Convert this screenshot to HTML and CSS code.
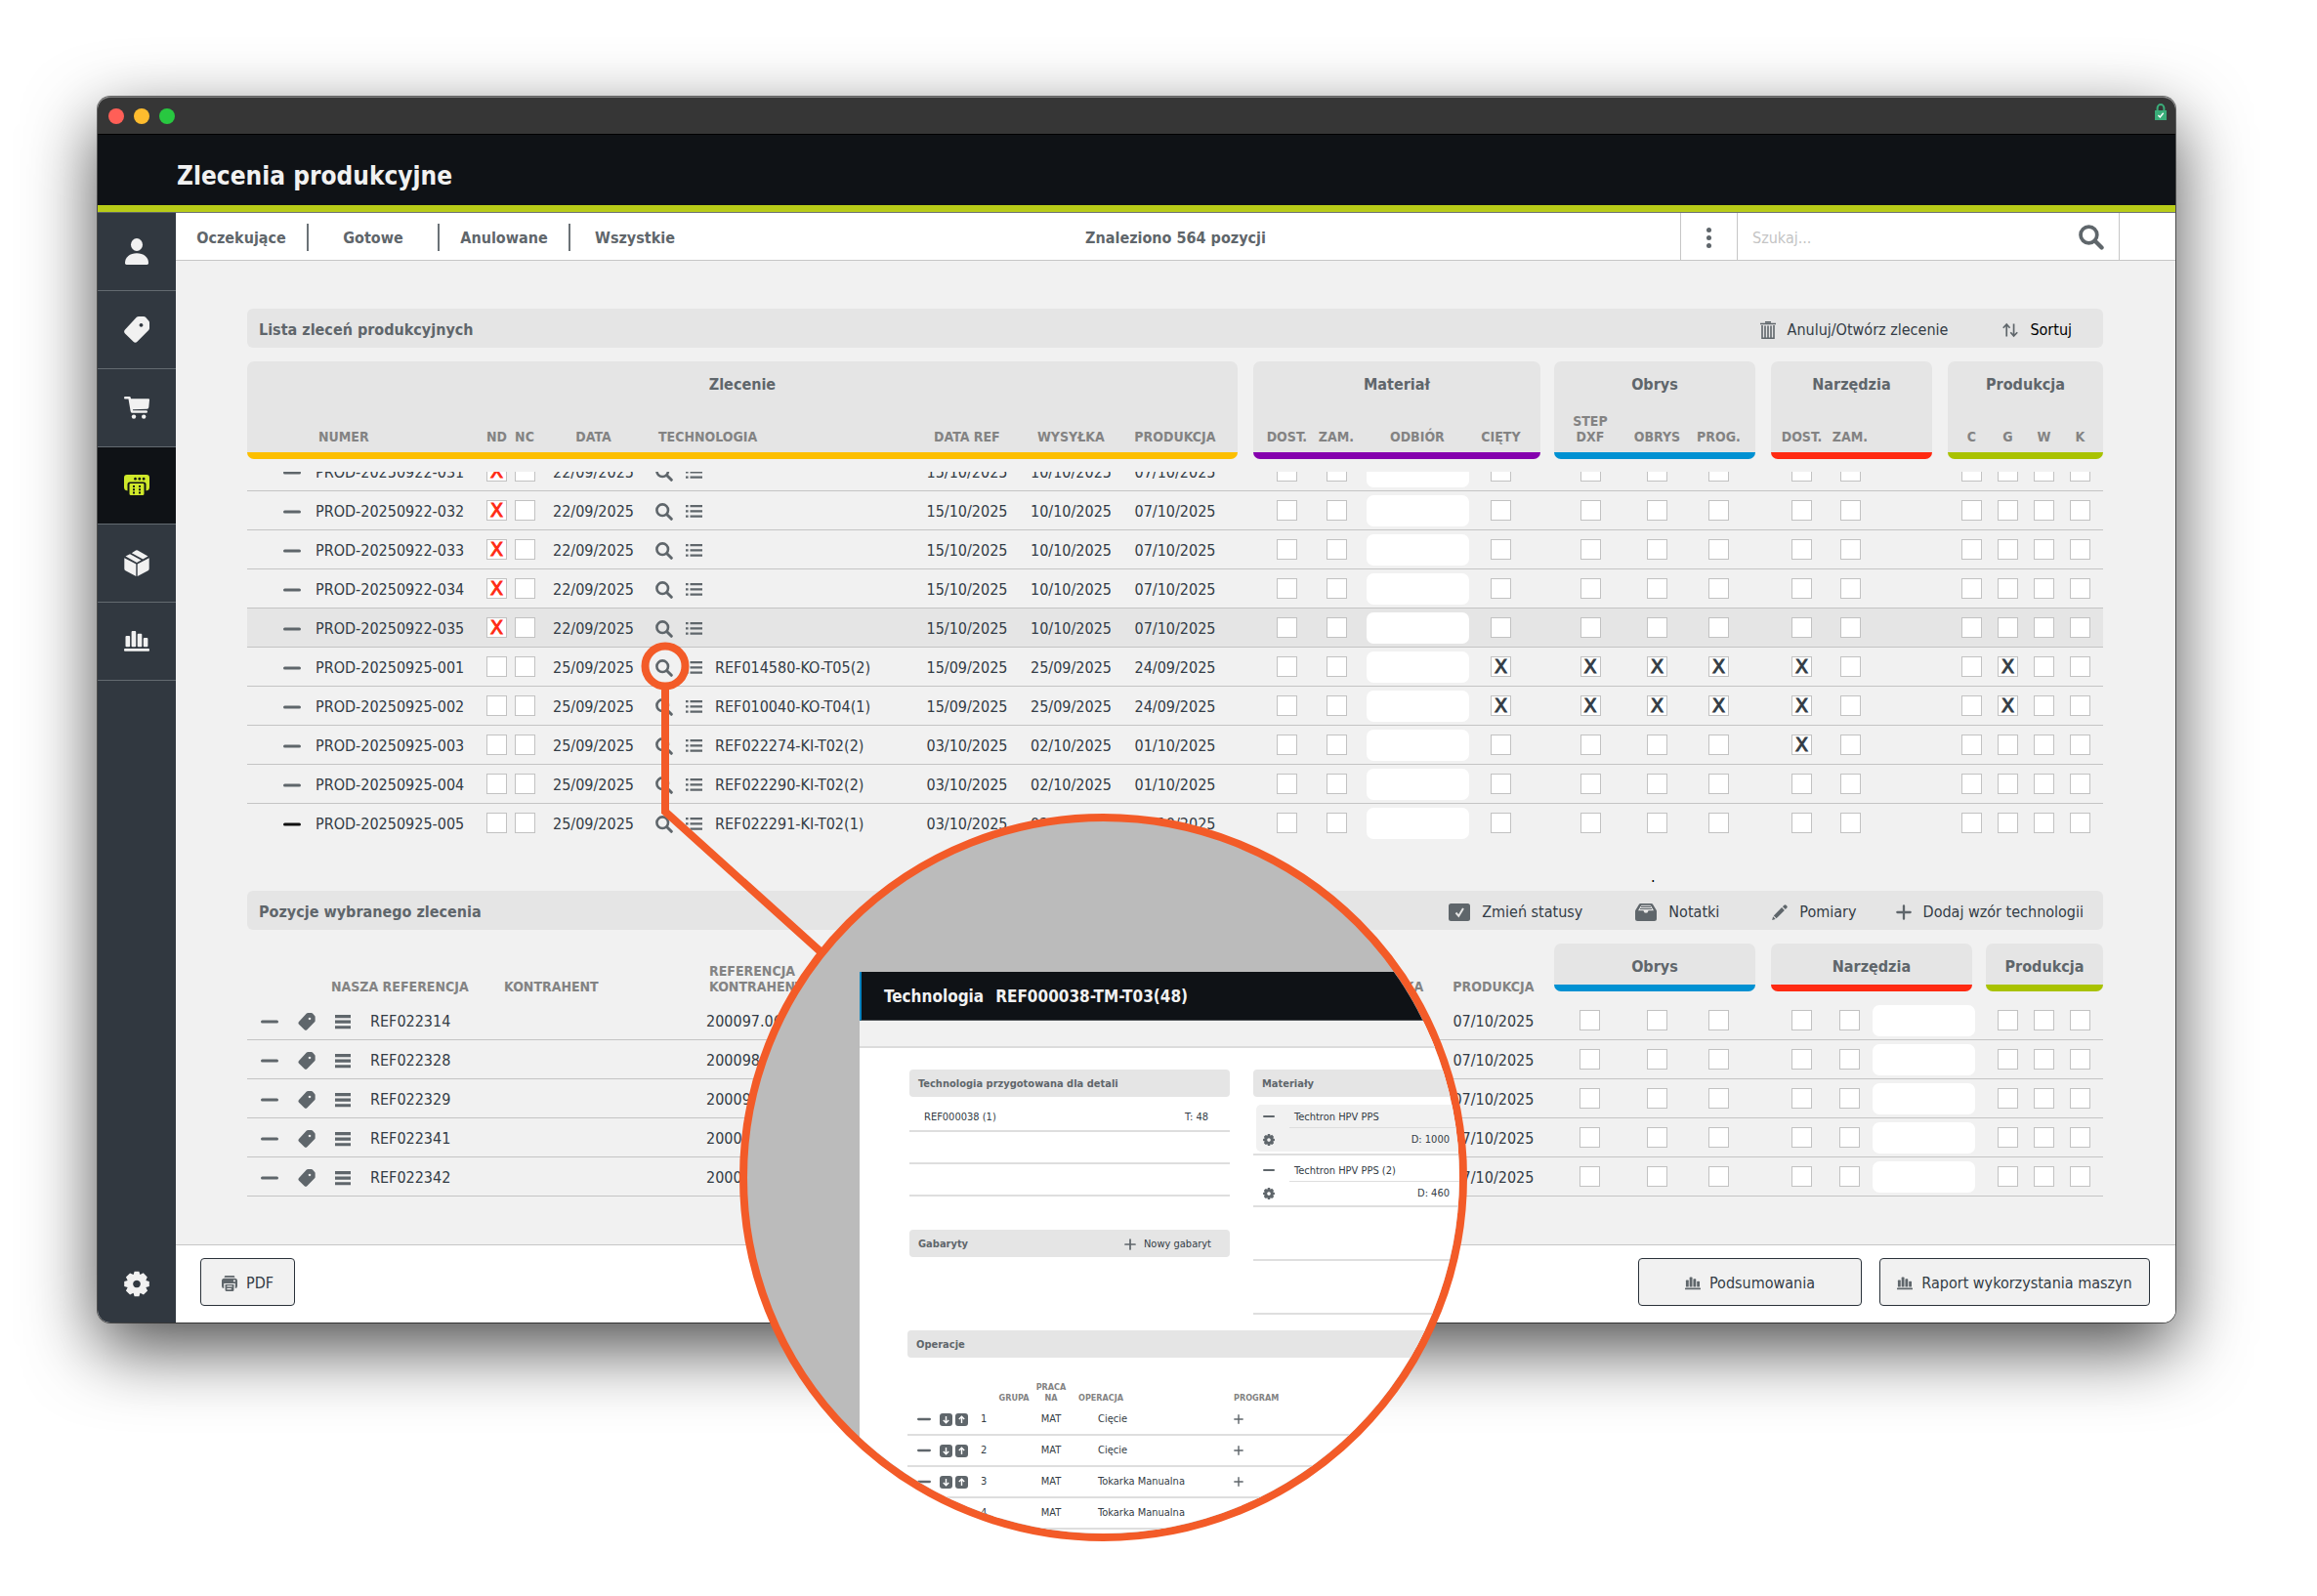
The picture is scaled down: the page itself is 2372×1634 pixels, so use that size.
FILE: index.html
```html
<!DOCTYPE html>
<html lang="pl">
<head>
<meta charset="utf-8">
<title>Zlecenia produkcyjne</title>
<link rel="stylesheet" href="styles.css">
</head>
<body>
<svg class="sprite" aria-hidden="true">
  <symbol id="i-user" viewBox="0 0 26 27"><ellipse cx="13" cy="6.5" rx="6" ry="6.5"/><path d="M1 25.3C1 19 6 15.2 13 15.2S25 19 25 25.3Q25 27 23.5 27H2.500Q1 27 1 25.300z"/></symbol>
  <symbol id="i-tag" viewBox="0 0 26 27"><path fill-rule="evenodd" d="M12.800.8Q13.700 0 15 0H20Q21.300 0 22 .8L25.300 4.500Q26 5.200 26 6.500V12Q26 13.200 25.200 14L13.500 25.800Q11.500 27.600 9.500 25.800L1 17.500Q-.8 15.500 1 13.500zM17.500 7a1.900 1.900 0 1 0 .01 0z"/></symbol>
  <symbol id="i-cart" viewBox="0 0 26 23"><path d="M1 0H5.500Q6.500 0 6.800 1L7 2.200H25Q26.200 2.200 26 3.400L25.300 11Q25.100 12.600 23.600 12.700L8.900 13.200 9.100 14.300H22.700Q24 14.400 24 15.500 24 16.700 22.700 16.800H8.500Q7 16.700 6.700 15.200L4.500 2.600H1Q0 2.500 0 1.300 0 .1 1 0z"/><circle cx="10" cy="20.600" r="2.200"/><circle cx="20.200" cy="20.600" r="2.200"/></symbol>
  <symbol id="i-machine" viewBox="0 0 26 21"><path fill-rule="evenodd" d="M3 0H23Q26 0 26 3V13Q26 16 22.500 16.500V10Q22.500 7.500 20 7.500H6Q3.500 7.500 3.500 10V16.500Q0 16 0 13V3Q0 0 3 0zM11.500 2.800a1.400 1.400 0 1 0 .01 0zM15.800 2.800a1.400 1.400 0 1 0 .01 0zM20.100 2.800a1.400 1.400 0 1 0 .01 0z"/><path fill-rule="evenodd" d="M6.500 9H19.500Q20.500 9 20.500 10V19.500Q20.500 21 19 21H7Q5.500 21 5.500 19.500V10Q5.500 9 6.500 9zM9 11v2h2v-2zM9 14.300v2h2v-2zM9 17.600v1.800h2v-1.800zM15 11v2h2v-2zM15 14.300v2h2v-2zM15 17.600v1.800h2v-1.800z"/></symbol>
  <symbol id="i-box" viewBox="0 0 26 27"><path d="M.3 8.300 12.300 14.400V27L1.500 21.200Q.3 20.500.3 19.200zM25.700 8.300 13.700 14.400V27L24.500 21.200Q25.700 20.500 25.700 19.200zM1.500 6.500 6 4.200 17.500 10.600 13 13zM7.800 3.300 12 .6Q13 0 14 .6L24.500 6.500 19.300 9.400z"/></symbol>
  <symbol id="i-bars" viewBox="0 0 26 21"><rect x="1.500" y="5" width="4.600" height="11.300" rx="1"/><rect x="7.600" y="0" width="4.600" height="16.300" rx="1"/><rect x="13.700" y="2.800" width="4.600" height="13.500" rx="1"/><rect x="19.800" y="7" width="4.600" height="9.300" rx="1"/><rect y="18" width="26" height="2.800" rx="1"/></symbol>
  <symbol id="i-gear" viewBox="-13.500 -13.500 27 27"><path fill-rule="evenodd" d="M-2.500-13.300H2.500L3.500-9.800 7-11.600 11.200-7.200 9.700-3.600 13.300-2.500V2.500L9.700 3.600 11.500 7.200 7.200 11.500 3.600 9.700 2.500 13.300H-2.500L-3.600 9.700-7.200 11.500-11.500 7.200-9.700 3.600-13.300 2.500V-2.500L-9.700-3.600-11.500-7.200-7.200-11.500-3.500-9.800zM0-4a4 4 0 1 0 .01 0z"/></symbol>
  <symbol id="i-search" viewBox="0 0 18 18"><circle cx="7.200" cy="7.200" r="5.800" fill="none" stroke="currentColor" stroke-width="2.600"/><path d="M11.800 11.800 16.300 16.300" stroke="currentColor" stroke-width="3" stroke-linecap="round"/></symbol>
  <symbol id="i-list" viewBox="0 0 17 13"><path d="M0 0h2.600v2.200H0zM4.500 0H17v2.200H4.500zM0 5.300h2.600v2.200H0zM4.500 5.300H17v2.200H4.500zM0 10.600h2.600v2.200H0zM4.500 10.600H17v2.200H4.500z"/></symbol>
  <symbol id="i-menu" viewBox="0 0 15 15"><path d="M0 1h15v3H0zM0 6.200h15v3H0zM0 11.400h15v3H0z"/></symbol>
  <symbol id="i-minus" viewBox="0 0 18 18"><path d="M1.500 9h15" stroke="currentColor" stroke-width="3" stroke-linecap="round"/></symbol>
  <symbol id="i-plus" viewBox="0 0 18 18"><path d="M1.500 9h15M9 1.500v15" stroke="currentColor" stroke-width="2.600" stroke-linecap="round"/></symbol>
  <symbol id="i-trash" viewBox="0 0 16 18"><path d="M0 2.500h16M5 .8h6" stroke="currentColor" stroke-width="1.600"/><path d="M2 4V17.200H14V4M5 4.500v12M8 4.500v12M11 4.500v12" fill="none" stroke="currentColor" stroke-width="1.600"/></symbol>
  <symbol id="i-sort" viewBox="0 0 17 16"><path d="M4.500 15V2M.8 5.600 4.500 1.600 8 5.600M12.300 1v13M8.800 10.400 12.300 14.400 16.200 10.400" fill="none" stroke="currentColor" stroke-width="1.800"/></symbol>
  <symbol id="i-check" viewBox="0 0 22 18"><rect width="22" height="18" rx="2.500"/><path d="M7.500 9.500 10.300 12.800 15 5" fill="none" stroke="#e5e5e5" stroke-width="2"/></symbol>
  <symbol id="i-notes" viewBox="0 0 22 18"><path fill-rule="evenodd" d="M5.500 0H16.500Q17.500 0 18 .8L21.500 6.500Q22 7.300 22 8.200V15.500Q22 18 19.500 18H2.500Q0 18 0 15.500V8.200Q0 7.300.5 6.500L4 .8Q4.500 0 5.500 0zM6.300 1.700 3 7.200H8.500Q8.800 9.800 11 9.800T13.500 7.200H19L15.700 1.700z"/><path d="M6 3.400H16M5 5.500H17" stroke="currentColor" stroke-width="1.100"/></symbol>
  <symbol id="i-pencil" viewBox="0 0 18 18"><path d="M12.300 2.500 14 .8Q15.200-.3 16.400.8L17.200 1.600Q18.300 2.800 17.200 4L15.500 5.700zM11.300 3.500 14.500 6.700 5.200 16 2 12.800zM1.200 13.800 4.200 16.800.2 17.900z"/></symbol>
  <symbol id="i-print" viewBox="0 0 18 18"><path fill-rule="evenodd" d="M4 0H14Q15 0 15 2H3Q3 0 4 0zM3 3H15Q18 3 18 6V12Q18 14.500 15.500 14.500V9H2.500V14.500Q0 14.500 0 12V6Q0 3 3 3zM13.500 5v2h2V5z"/><path fill-rule="evenodd" d="M4 10H14V16.500Q14 18 12.500 18H5.500Q4 18 4 16.500zM6 11.500v1.500h6v-1.500zM6 14.500V16h5v-1.500z"/></symbol>
  <symbol id="i-lock" viewBox="0 0 12 17"><path d="M2.600 8V4.500a3.400 3.400 0 0 1 6.800 0V8" fill="none" stroke="currentColor" stroke-width="2"/><rect y="7" width="12" height="10"/><path d="M3.400 12 5.300 14 8.700 9.800" fill="none" stroke="#fff" stroke-width="1.400"/></symbol>
  <symbol id="i-down" viewBox="0 0 13 13"><rect width="13" height="13" rx="3"/><path d="M6.500 3v7M3.800 7 6.500 9.800 9.200 7" fill="none" stroke="#fff" stroke-width="1.400"/></symbol>
  <symbol id="i-up" viewBox="0 0 13 13"><rect width="13" height="13" rx="3"/><path d="M6.500 10V3M3.800 6 6.500 3.200 9.200 6" fill="none" stroke="#fff" stroke-width="1.400"/></symbol>
</svg>

<div class="window">
  <div class="titlebar">
    <div class="lights"><i class="light red"></i><i class="light amber"></i><i class="light green"></i></div>
    <svg class="lock"><use href="#i-lock"/></svg>
  </div>
  <header class="header"><h1>Zlecenia produkcyjne</h1></header>

  <div class="shell">
    <nav class="sidebar" aria-label="Moduły">
      <ul class="modules">
        <li><a href="#" aria-label="Kontrahenci"><svg class="m27"><use href="#i-user"/></svg></a></li>
        <li><a href="#" aria-label="Oferty"><svg class="m27"><use href="#i-tag"/></svg></a></li>
        <li><a href="#" aria-label="Zamówienia"><svg class="m23"><use href="#i-cart"/></svg></a></li>
        <li><a href="#" class="active" aria-label="Produkcja" aria-current="page"><svg class="m21"><use href="#i-machine"/></svg></a></li>
        <li><a href="#" aria-label="Magazyn"><svg class="m27"><use href="#i-box"/></svg></a></li>
        <li><a href="#" aria-label="Statystyki"><svg class="m21"><use href="#i-bars"/></svg></a></li>
      </ul>
      <a href="#" class="settings" aria-label="Ustawienia"><svg class="m27"><use href="#i-gear"/></svg></a>
    </nav>

    <div class="page">
      <div class="toolbar">
        <div class="tabs">
          <a href="#">Oczekujące</a><a href="#">Gotowe</a><a href="#">Anulowane</a><a href="#">Wszystkie</a>
        </div>
        <p class="found">Znaleziono 564 pozycji</p>
        <div class="tools">
          <button class="more" aria-label="Więcej"><i></i><i></i><i></i></button>
          <label class="search"><input type="text" placeholder="Szukaj..." aria-label="Szukaj"><svg><use href="#i-search"/></svg></label>
        </div>
      </div>

      <main class="content">
        <section>
          <div class="bar">
            <h2>Lista zleceń produkcyjnych</h2>
            <div class="actions orders-actions">
              <button><svg class="w16"><use href="#i-trash"/></svg>Anuluj/Otwórz zlecenie</button>
              <button class="strong"><svg class="w16"><use href="#i-sort"/></svg>Sortuj</button>
            </div>
          </div>
          <table class="grid orders orders-head">
            <colgroup>
              <col class="w70"><col class="w172"><col class="w27"><col class="w30"><col class="w103"><col><col class="w100"><col class="w113"><col class="w114">
              <col class="w16c"><col class="w66"><col class="w38"><col class="w128"><col class="w62">
              <col class="w14"><col class="w74"><col class="w63"><col class="w69">
              <col class="w16c"><col class="w56"><col class="w50"><col class="w59">
              <col class="w16c"><col class="w43"><col class="w37"><col class="w37"><col class="w42">
            </colgroup>
            <thead>
              <tr class="groups">
                <th colspan="9">Zlecenie</th><td></td>
                <th colspan="4">Materiał</th><td></td>
                <th colspan="3">Obrys</th><td></td>
                <th colspan="3">Narzędzia</th><td></td>
                <th colspan="4">Produkcja</th>
              </tr>
              <tr class="labels">
                <th class="yellow first"></th><th class="yellow num">NUMER</th><th class="yellow">ND</th><th class="yellow">NC</th><th class="yellow">DATA</th><th class="yellow tech">TECHNOLOGIA</th><th class="yellow">DATA REF</th><th class="yellow">WYSYŁKA</th><th class="yellow last">PRODUKCJA</th><td></td>
                <th class="purple first">DOST.</th><th class="purple">ZAM.</th><th class="purple">ODBIÓR</th><th class="purple last">CIĘTY</th><td></td>
                <th class="blue first">STEP<br>DXF</th><th class="blue">OBRYS</th><th class="blue last">PROG.</th><td></td>
                <th class="red first">DOST.</th><th class="red">ZAM.</th><th class="red last"></th><td></td>
                <th class="lime first">C</th><th class="lime">G</th><th class="lime">W</th><th class="lime last">K</th>
              </tr>
            </thead>
          </table>
          <div class="scroller">
            <table class="grid orders" aria-label="Lista zleceń produkcyjnych">
              <colgroup>
                <col class="w70"><col class="w172"><col class="w27"><col class="w30"><col class="w103"><col><col class="w100"><col class="w113"><col class="w114">
                <col class="w16c"><col class="w66"><col class="w38"><col class="w128"><col class="w62">
                <col class="w14"><col class="w74"><col class="w63"><col class="w69">
                <col class="w16c"><col class="w56"><col class="w50"><col class="w59">
                <col class="w16c"><col class="w43"><col class="w37"><col class="w37"><col class="w42">
              </colgroup>
              <tbody id="orders"></tbody>
            </table>
          </div>
        </section>

        <p class="note">.</p>

        <section>
          <div class="bar">
            <h2>Pozycje wybranego zlecenia</h2>
            <div class="actions items-actions">
              <button class="wide"><svg class="w22"><use href="#i-check"/></svg>Zmień statusy</button>
              <button class="wide"><svg class="w22"><use href="#i-notes"/></svg>Notatki</button>
              <button><svg class="w16"><use href="#i-pencil"/></svg>Pomiary</button>
              <button><svg class="w16"><use href="#i-plus"/></svg>Dodaj wzór technologii</button>
            </div>
          </div>
          <table class="grid items">
            <colgroup>
              <col class="w126"><col class="w137"><col class="w207"><col><col class="w88"><col class="w124">
              <col class="w74"><col class="w63"><col class="w69">
              <col class="w16c"><col class="w56"><col class="w50"><col class="w100">
              <col class="w14"><col class="w41"><col class="w37"><col class="w42">
            </colgroup>
            <thead>
              <tr>
                <th colspan="2" class="ref">NASZA REFERENCJA</th><th class="left">KONTRAHENT</th><th class="left client">REFERENCJA<br>KONTRAHENTA</th><th>WYSYŁKA</th><th>PRODUKCJA</th>
                <th colspan="3" class="group"><div class="blue">Obrys</div></th><td></td>
                <th colspan="3" class="group"><div class="red">Narzędzia</div></th><td></td>
                <th colspan="3" class="group"><div class="lime">Produkcja</div></th>
              </tr>
            </thead>
            <tbody id="items"></tbody>
          </table>
        </section>
      </main>

      <footer class="footer">
        <button class="pdf"><svg class="w16"><use href="#i-print"/></svg>PDF</button>
        <div class="reports">
          <button class="summary"><svg class="w16"><use href="#i-bars"/></svg>Podsumowania</button>
          <button class="report"><svg class="w16"><use href="#i-bars"/></svg>Raport wykorzystania maszyn</button>
        </div>
      </footer>
    </div>
  </div>

  <svg class="pointer" viewBox="0 0 200 330" aria-hidden="true"><circle cx="25" cy="25" r="20.500"/><path d="M25 48V174L187 320"/></svg>

  <aside class="lens" aria-label="Technologia">
    <div class="modal">
      <div class="modal-head"><span>Technologia</span><span>REF000038-TM-T03(48)</span></div>
      <div class="modal-strip"></div>
      <div class="modal-body">
        <div class="columns">
          <div class="col-parts">
            <h3>Technologia przygotowana dla detali</h3>
            <div class="part"><span>REF000038 (1)</span><span>T: 48</span></div>
            <div class="part"></div>
            <div class="part"></div>
            <h3 class="sizes">Gabaryty <button><svg><use href="#i-plus"/></svg>Nowy gabaryt</button></h3>
          </div>
          <div class="col-materials">
            <h3>Materiały</h3>
            <div class="material">
              <div class="material-card shaded">
                <svg><use href="#i-minus"/></svg><span class="name">Techtron HPV PPS</span>
                <svg><use href="#i-gear"/></svg><span class="dim">D: 1000</span>
              </div>
            </div>
            <div class="material">
              <div class="material-card">
                <svg><use href="#i-minus"/></svg><span class="name">Techtron HPV PPS (2)</span>
                <svg><use href="#i-gear"/></svg><span class="dim">D: 460</span>
              </div>
            </div>
            <div class="material blank"></div>
            <div class="material blank"></div>
          </div>
        </div>
        <h3 class="ops-title">Operacje</h3>
        <table class="ops">
          <colgroup><col class="o75"><col class="o50"><col class="o44"><col class="o160"><col></colgroup>
          <thead><tr><th></th><th class="op-group">GRUPA</th><th>PRACA<br>NA</th><th class="left op-head">OPERACJA</th><th class="left">PROGRAM</th></tr></thead>
          <tbody id="ops"></tbody>
        </table>
      </div>
    </div>
  </aside>
</div>
<script src="script.js"></script>
</body>
</html>
```
FILE: script.js
```js
const icon = (name, cls) => `<svg class="${cls}"><use href="#i-${name}"/></svg>`;
const box = (label, on) => `<td class="box"><input type="checkbox" aria-label="${label}"${on ? " checked" : ""}></td>`;
const field = (label) => `<td class="box"><input type="text" class="field" aria-label="${label}"></td>`;
const gap = "<td></td>";

const early = ["15/10/2025", "10/10/2025", "07/10/2025"];
const mid = ["15/09/2025", "25/09/2025", "24/09/2025"];
const late = ["03/10/2025", "02/10/2025", "01/10/2025"];
const full = ["Cięty", "STEP DXF", "Obrys", "Prog.", "Narzędzia dost.", "G"];

const orders = [
  ["20250922-031", "22/09/2025", "", early, ["ND"]],
  ["20250922-032", "22/09/2025", "", early, ["ND"]],
  ["20250922-033", "22/09/2025", "", early, ["ND"]],
  ["20250922-034", "22/09/2025", "", early, ["ND"]],
  ["20250922-035", "22/09/2025", "", early, ["ND"]],
  ["20250925-001", "25/09/2025", "REF014580-KO-T05(2)", mid, full],
  ["20250925-002", "25/09/2025", "REF010040-KO-T04(1)", mid, full],
  ["20250925-003", "25/09/2025", "REF022274-KI-T02(2)", late, ["Narzędzia dost."]],
  ["20250925-004", "25/09/2025", "REF022290-KI-T02(2)", late, []],
  ["20250925-005", "25/09/2025", "REF022291-KI-T02(1)", late, []]
];

document.getElementById("orders").innerHTML = orders.map(([id, date, tech, dates, on]) => {
  const b = (label) => box(label, on.includes(label));
  return `<tr${id === "20250922-035" ? ' class="selected"' : ""}>
    <td class="remove"><button aria-label="Usuń">${icon("minus", "w18")}</button></td>
    <td>PROD-${id}</td>${b("ND").replace('class="box"', 'class="box alert"')}${b("NC")}
    <td class="mid">${date}</td>
    <td><div class="tech-cell"><button aria-label="Podgląd">${icon("search", "w18")}</button><button aria-label="Lista">${icon("list", "w17")}</button><span>${tech}</span></div></td>
    ${dates.map((d) => `<td class="mid">${d}</td>`).join("")}${gap}
    ${b("Dost.")}${b("Zam.")}${field("Odbiór")}${b("Cięty")}${gap}
    ${b("STEP DXF")}${b("Obrys")}${b("Prog.")}${gap}
    ${b("Narzędzia dost.")}${b("Narzędzia zam.")}${gap}${gap}
    ${b("C")}${b("G")}${b("W")}${b("K")}</tr>`;
}).join("");

const items = [
  ["REF022314", "200097.06"], ["REF022328", "200098."], ["REF022329", "20009"],
  ["REF022341", "20009"], ["REF022342", "2000"]
];

document.getElementById("items").innerHTML = items.map(([ref, client]) => `<tr>
    <td><div class="item-icons"><button aria-label="Usuń">${icon("minus", "w18")}</button><button aria-label="Oferta">${icon("tag", "w18")}</button><button aria-label="Menu">${icon("menu", "w16")}</button></div></td>
    <td>${ref}</td><td></td><td>${client}</td><td></td><td class="mid">07/10/2025</td>
    ${box("STEP DXF")}${box("Obrys")}${box("Prog.")}${gap}
    ${box("Dost.")}${box("Zam.")}${field("Narzędzie")}${gap}
    ${box("G")}${box("W")}${box("K")}</tr>`).join("");

document.getElementById("ops").innerHTML = ["Cięcie", "Cięcie", "Tokarka Manualna", "Tokarka Manualna"].map((name, i) => `<tr>
    <td><div class="op-icons">${icon("minus", "w14")}${icon("down", "w13")}${icon("up", "w13")}</div></td>
    <td class="left">${i + 1}</td><td>MAT</td><td class="left op-name">${name}</td>
    <td class="left">${i < 3 ? icon("plus", "w10") : ""}</td></tr>`).join("");
```
FILE: styles.css
```css
* { box-sizing: border-box; }
body {
  margin: 0;
  padding: 99px 145px 279px 100px;
  background: #fff;
  color: #333c45;
  font: 16px/20px "DejaVu Sans Condensed", "DejaVu Sans", sans-serif;
}
h1, h2, h3, p, ul { margin: 0; padding: 0; }
a { color: inherit; text-decoration: none; }
button { margin: 0; padding: 0; border: 0; background: none; color: inherit; font: inherit; }
svg { display: block; fill: currentColor; flex: none; }
.sprite { position: absolute; width: 0; height: 0; }

.window {
  position: relative;
  border-radius: 13px;
  box-shadow: 0 0 0 1px rgba(0, 0, 0, .55), 0 26px 72px rgba(0, 0, 0, .7);
}
.titlebar {
  display: flex;
  justify-content: space-between;
  align-items: center;
  height: 38px;
  padding: 0 9px 0 11px;
  border-top: 1px solid #7c7c7c;
  border-radius: 13px 13px 0 0;
  background: #363636;
}
.lights { display: flex; gap: 10px; }
.light { width: 16px; height: 16px; border-radius: 50%; }
.light.red { background: #ff5f57; }
.light.amber { background: #febc2e; }
.light.green { background: #28c840; }
.lock { width: 12px; height: 17px; margin-bottom: 8px; color: #3aad79; }
.header {
  display: flex;
  align-items: center;
  height: 80px;
  padding: 11px 0 0 81px;
  border-top: 1px solid #000;
  border-bottom: 7px solid #b8cc18;
  background: #0f1216;
  color: #f1f1f1;
}
.header h1 { font-size: 26px; line-height: 34px; }

.shell { display: flex; border-radius: 0 0 13px 13px; overflow: hidden; background: #f1f1f1; }
.sidebar {
  display: flex;
  flex-direction: column;
  justify-content: space-between;
  width: 80px;
  border-top: 1px solid #5c636a;
  background: #313840;
  color: #f1f1f1;
}
.modules { display: grid; grid-auto-rows: 1fr; height: 479px; list-style: none; }
.modules a { display: grid; place-items: center; height: 100%; border-bottom: 1px solid #636a70; }
.modules .active { background: #0f1216; color: #cfe82a; }
.settings { display: grid; place-items: center; height: 80px; }
.m27 { width: 26px; height: 27px; }
.m23 { width: 26px; height: 23px; }
.m21 { width: 26px; height: 21px; }

.page { flex: 1; min-width: 0; }
.toolbar {
  display: grid;
  grid-template-columns: 1fr auto 1fr;
  align-items: stretch;
  height: 50px;
  border-top: 1px solid #6d7378;
  border-bottom: 1px solid #c6c6c6;
  background: #fff;
  color: #5f666b;
}
.tabs { display: flex; align-items: center; font-weight: bold; }
.tabs a { width: 134px; padding-top: 2px; line-height: 26px; text-align: center; }
.tabs a + a { border-left: 2px solid #6b7277; }
.tabs { padding-top: 2px; }
.found { align-self: center; padding-top: 4px; font-weight: bold; }
.tools { display: flex; justify-content: flex-end; padding-right: 57px; }
.more {
  display: flex;
  flex-direction: column;
  justify-content: center;
  align-items: center;
  gap: 3px;
  width: 58px;
  padding-top: 2px;
  border-left: 1px solid #c6c6c6;
}
.more i { width: 5px; height: 5px; border-radius: 50%; background: #5f666b; }
.search {
  display: flex;
  align-items: center;
  width: 392px;
  padding: 2px 15px 0 15px;
  border: solid #c6c6c6;
  border-width: 0 1px;
}
.search input { flex: 1; min-width: 0; padding: 2px 0 0; border: 0; outline: 0; background: none; font: inherit; }
.search input::placeholder { color: #c4c4c4; opacity: 1; }
.search svg { width: 26px; height: 26px; }

.content { padding: 49px 74px 49px 73px; }
.bar {
  display: flex;
  align-items: center;
  justify-content: space-between;
  height: 40px;
  margin-bottom: 14px;
  padding: 3px 0 0 12px;
  border-radius: 6px;
  background: #e5e5e5;
}
.bar h2 { color: #5f666b; font-size: 16px; line-height: 20px; }
.actions, .actions button { display: flex; align-items: center; }
.actions button { gap: 12px; }
.actions svg { height: 18px; color: #5f666b; }
.orders-actions { gap: 56px; padding-right: 32px; }
.items-actions { gap: 40px; padding-right: 20px; }
.items-actions .wide { margin-right: 14px; }
.actions .strong { color: #000; }
.w10 { width: 10px; height: 10px; }
.w13 { width: 13px; height: 13px; }
.w14 { width: 14px; height: 14px; }
.w16 { width: 16px; height: 16px; }
.w17 { width: 17px; height: 13px; }
.w18 { width: 18px; height: 18px; }
.w22 { width: 22px; height: 18px; }

.grid { width: 100%; table-layout: fixed; border-collapse: separate; border-spacing: 0; }
.grid th, .grid td { padding: 0; white-space: nowrap; text-align: left; }
.grid .mid { text-align: center; }
.grid thead th { color: #838383; font-size: 14px; line-height: 16px; text-align: center; vertical-align: bottom; }
col.w14 { width: 14px; } col.w16c { width: 16px; } col.w27 { width: 27px; } col.w30 { width: 30px; }
col.w37 { width: 37px; } col.w38 { width: 38px; } col.w41 { width: 41px; } col.w42 { width: 42px; }
col.w43 { width: 43px; } col.w50 { width: 50px; } col.w56 { width: 56px; } col.w59 { width: 59px; }
col.w62 { width: 62px; } col.w63 { width: 63px; } col.w66 { width: 66px; } col.w69 { width: 69px; }
col.w70 { width: 70px; } col.w74 { width: 74px; } col.w88 { width: 88px; } col.w100 { width: 100px; }
col.w103 { width: 103px; } col.w113 { width: 113px; } col.w114 { width: 114px; } col.w124 { width: 124px; }
col.w126 { width: 126px; } col.w128 { width: 128px; } col.w137 { width: 137px; } col.w172 { width: 172px; }
col.w207 { width: 207px; }

.grid .groups th {
  height: 47px;
  border-radius: 7px 7px 0 0;
  background: #e5e5e5;
  color: #5f666b;
  font-size: 16px;
  line-height: 20px;
  vertical-align: middle;
}
.grid .labels th { height: 53px; padding-bottom: 8px; border-bottom-width: 7px; border-bottom-style: solid; background: #e5e5e5; }
.grid .labels .first { border-bottom-left-radius: 7px; }
.grid .labels .last { border-bottom-right-radius: 7px; }
.grid .labels .num { padding-left: 3px; text-align: left; }
.grid .labels .tech { padding-left: 19px; text-align: left; }
.grid .yellow { border-color: #fcbf00; }
.grid .purple { border-color: #8500ae; }
.grid .blue { border-color: #0091d2; }
.grid .red { border-color: #ff2a12; }
.grid .lime { border-color: #a9c200; }

.scroller {
  display: flex;
  flex-direction: column;
  justify-content: flex-end;
  height: 380px;
  margin-top: 13px;
  overflow: hidden;
}
.grid tbody td { height: 40px; padding-top: 2px; border-bottom: 1px solid #c4c4c4; }
.grid tbody .box { padding-top: 0; }
.scroller .grid tr:last-child td { border-bottom-color: transparent; }
.grid .selected td { background: #e5e5e5; }
.grid tbody svg { color: #5f666b; }
.grid tbody .remove { padding-left: 37px; }
.grid button { display: block; }
.scroller tr:last-child .remove svg { color: #111; }
.tech-cell { display: flex; align-items: center; gap: 13px; padding-left: 16px; }
.item-icons { display: flex; align-items: center; gap: 20px; padding-left: 14px; }

/* group edges: keep the outer tick boxes in line with their labels */
.orders tr:not(.groups) > :nth-child(5) { padding-left: 8px; }
.orders tr:not(.groups) > :nth-child(9) { padding-right: 14px; }
.orders tr:not(.groups) > :nth-child(11) { padding-left: 3px; }
.orders tr:not(.groups) > :nth-child(14) { padding-right: 19px; }
.orders tr:not(.groups) > :nth-child(18) { padding-right: 6px; }
.orders tr:not(.groups) > :nth-child(20) { padding-left: 7px; }
.orders tr:not(.groups) > :nth-child(24) { padding-left: 6px; }
.orders tr:not(.groups) > :nth-child(27) { padding-right: 5px; }
.items tbody tr > :nth-child(9) { padding-right: 6px; }
.items tbody tr > :nth-child(11) { padding-left: 7px; }
.items tbody tr > :nth-child(15) { padding-left: 4px; }
.items tbody tr > :nth-child(17) { padding-right: 5px; }

.box input { display: block; margin: 0 auto; appearance: none; background: #fff; }
.box input[type="checkbox"] {
  display: grid;
  place-items: center;
  width: 21px;
  height: 21px;
  border: 1px solid #c2c2c2;
}
.box input:checked::before {
  content: "X";
  color: #333c45;
  font: 19px/19px "DejaVu Sans", sans-serif;
  -webkit-text-stroke: 1px currentColor;
}
.alert input:checked::before { color: #ff2a12; }
.box .field { width: 105px; height: 32px; border: 0; border-radius: 7px; }
.items .box .field { margin: 0 -2px; }

.note { margin: 25px 0 4px; padding-left: 1437px; font-size: 16px; line-height: 20px; color: #000; }

.items thead tr { height: 59px; }
.grid.items thead th { padding-bottom: 7px; }
.grid.items thead .ref { padding-left: 86px; text-align: left; }
.grid.items thead .left { text-align: left; }
.grid.items thead .client { padding-left: 3px; }
.grid.items thead .group { padding: 0; vertical-align: top; }
.group div {
  height: 49px;
  padding-top: 14px;
  border-bottom: 7px solid;
  border-radius: 7px;
  background: #e5e5e5;
  color: #5f666b;
  font-size: 16px;
  line-height: 20px;
}

.footer {
  display: flex;
  justify-content: space-between;
  padding: 13px 26px 17px 25px;
  border-top: 1px solid #c6c6c6;
  background: #fff;
}
.reports { display: flex; gap: 18px; }
.footer button {
  display: flex;
  align-items: center;
  justify-content: center;
  gap: 9px;
  height: 49px;
  padding-top: 2px;
  border: 1px solid #2a323a;
  border-radius: 4px;
  background: #f1f1f1;
}
.footer svg { color: #5f666b; }
.pdf { width: 97px; }
.summary { width: 229px; }
.report { width: 277px; }

/* magnified view that lies over the window */
.pointer { position: absolute; left: 556px; top: 558px; width: 200px; height: 330px; fill: none; stroke: #f35b28; stroke-width: 8px; }
.lens {
  position: absolute;
  left: 657px;
  top: 734px;
  width: 745px;
  height: 745px;
  border: 8px solid #f35b28;
  border-radius: 50%;
  background: #bbb;
  overflow: hidden;
  font-size: 11px;
  line-height: 16px;
}
.modal { margin: 154px 0 0 115px; min-height: 600px; background: #fff; }
.modal-head {
  display: flex;
  align-items: center;
  gap: 12px;
  height: 50px;
  padding-left: 23px;
  border-left: 2px solid #0082be;
  border-bottom: 1px solid #4a4e52;
  background: #0f1216;
  color: #f1f1f1;
  font-size: 17px;
  font-weight: bold;
}
.modal-strip { height: 28px; border-bottom: 2px solid #dcdcdc; background: #f1f1f1; }
.modal-body { padding: 22px 0 0 49px; }
.modal h3 {
  display: flex;
  align-items: center;
  height: 28px;
  padding: 1px 0 0 9px;
  border-radius: 4px;
  background: #e5e5e5;
  color: #5f666b;
  font-size: 11px;
  line-height: 16px;
}
.columns { display: flex; gap: 24px; margin-left: 2px; }
.col-parts { width: 328px; }
.col-materials { flex: 1; }
.part {
  display: flex;
  justify-content: space-between;
  align-items: flex-end;
  height: 33px;
  padding: 0 22px 5px 15px;
  border-bottom: 2px solid #dedede;
}
.modal h3 + .part { height: 36px; }
.modal .sizes { justify-content: space-between; margin-top: 34px; padding-right: 19px; }
.sizes button { display: flex; align-items: center; gap: 8px; color: #333c45; font-weight: normal; }
.sizes svg { width: 12px; height: 12px; color: #5f666b; }
.material { border-bottom: 2px solid #dedede; padding: 3px 0 0 3px; }
.modal h3 + .material { padding: 8px 0 2px 3px; }
.material.blank { height: 55px; }
.material-card {
  display: grid;
  grid-template-columns: 19px 1fr;
  column-gap: 8px;
  align-items: center;
  padding-left: 7px;
  border-radius: 5px 0 0 5px;
}
.material-card.shaded { background: #f1f1f1; }
.material-card svg { width: 12px; height: 12px; color: #5f666b; }
.name { padding: 5px 0 2px 5px; border-bottom: 1px solid #dedede; }
.dim { padding: 4px 10px 4px 0; text-align: right; }
.modal .ops-title { margin-top: 16px; }
.ops { width: 100%; table-layout: fixed; border-spacing: 0; margin-top: 20px; }
.ops th, .ops td { padding: 0; text-align: center; white-space: nowrap; }
.ops th { height: 28px; padding-bottom: 1px; color: #838383; font-size: 9px; line-height: 11px; vertical-align: bottom; }
.ops td { height: 32px; border-bottom: 2px solid #dedede; }
.ops .left { text-align: left; }
.ops .op-group { padding-left: 18px; }
.ops .op-head { padding-left: 6px; }
.ops .op-name { padding-left: 26px; }
.ops svg { color: #5f666b; }
.op-icons { display: flex; align-items: center; gap: 3px; padding-left: 10px; }
.op-icons .w14 { margin-right: 6px; }
col.o75 { width: 75px; } col.o50 { width: 50px; } col.o44 { width: 44px; } col.o160 { width: 165px; }
```
